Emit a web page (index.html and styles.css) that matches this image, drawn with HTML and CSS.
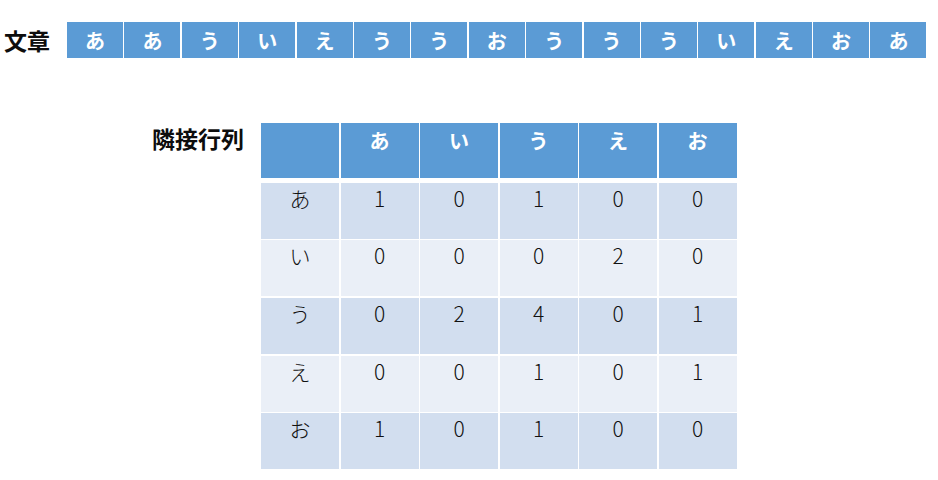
FILE: index.html
```html
<!DOCTYPE html>
<html lang="ja">
<head>
<meta charset="utf-8">
<link rel="stylesheet" href="styles.css">
</head>
<body>
<div class="sentence-row">
  <div class="label sentence-label">文章</div>
  <div class="strip">
    <div class="chip">あ</div><div class="chip">あ</div><div class="chip">う</div><div class="chip">い</div><div class="chip">え</div><div class="chip">う</div><div class="chip">う</div><div class="chip">お</div><div class="chip">う</div><div class="chip">う</div><div class="chip">う</div><div class="chip">い</div><div class="chip">え</div><div class="chip">お</div><div class="chip">あ</div>
  </div>
</div>
<div class="matrix-row">
  <div class="label matrix-label">隣接行列</div>
  <div class="matrix">
    <div class="hd"></div><div class="hd">あ</div><div class="hd">い</div><div class="hd">う</div><div class="hd">え</div><div class="hd">お</div>
    <div class="c odd">あ</div><div class="c odd">1</div><div class="c odd">0</div><div class="c odd">1</div><div class="c odd">0</div><div class="c odd">0</div>
    <div class="c even">い</div><div class="c even">0</div><div class="c even">0</div><div class="c even">0</div><div class="c even">2</div><div class="c even">0</div>
    <div class="c odd">う</div><div class="c odd">0</div><div class="c odd">2</div><div class="c odd">4</div><div class="c odd">0</div><div class="c odd">1</div>
    <div class="c even">え</div><div class="c even">0</div><div class="c even">0</div><div class="c even">1</div><div class="c even">0</div><div class="c even">1</div>
    <div class="c odd">お</div><div class="c odd">1</div><div class="c odd">0</div><div class="c odd">1</div><div class="c odd">0</div><div class="c odd">0</div>
  </div>
</div>
</body>
</html>
```

FILE: styles.css
```css
html, body {
  margin: 0;
  padding: 0;
  background: #ffffff;
  width: 938px;
  height: 480px;
  overflow: hidden;
  font-family: "Noto Sans CJK JP", "Noto Sans", sans-serif;
}

.label {
  font-weight: 700;
  font-size: 23px;
  color: #0d0d0d;
  line-height: 1;
}

.sentence-row {
  display: flex;
  align-items: center;
  padding-top: 22px;
  padding-left: 4px;
}

.sentence-label {
  width: 63px;
}

.strip {
  display: flex;
  gap: 1.4px;
}

.chip {
  width: 56px;
  height: 36px;
  background: #5b9bd5;
  color: #ffffff;
  font-weight: 700;
  font-size: 20px;
  display: flex;
  align-items: center;
  justify-content: center;
}

.matrix-row {
  display: flex;
  align-items: flex-start;
  padding-top: 65px;
  padding-left: 152px;
}

.matrix-label {
  width: 109px;
  margin-top: 4px;
}

.matrix {
  display: grid;
  grid-template-columns: repeat(6, 78px);
  grid-template-rows: 58px repeat(5, 56px);
  column-gap: 1.5px;
  row-gap: 1.7px;
}

.hd {
  background: #5b9bd5;
  color: #ffffff;
  font-weight: 700;
  font-size: 20px;
  text-align: center;
  padding-top: 6px;
  margin-bottom: 3px;
  box-sizing: border-box;
  line-height: 24px;
}

.c {
  color: #111111;
  font-weight: 300;
  font-size: 21px;
  text-align: center;
  padding-top: 2px;
  line-height: 26px;
  box-sizing: border-box;
}

.odd { background: #d2deef; }
.even { background: #eaeff7; }
```
